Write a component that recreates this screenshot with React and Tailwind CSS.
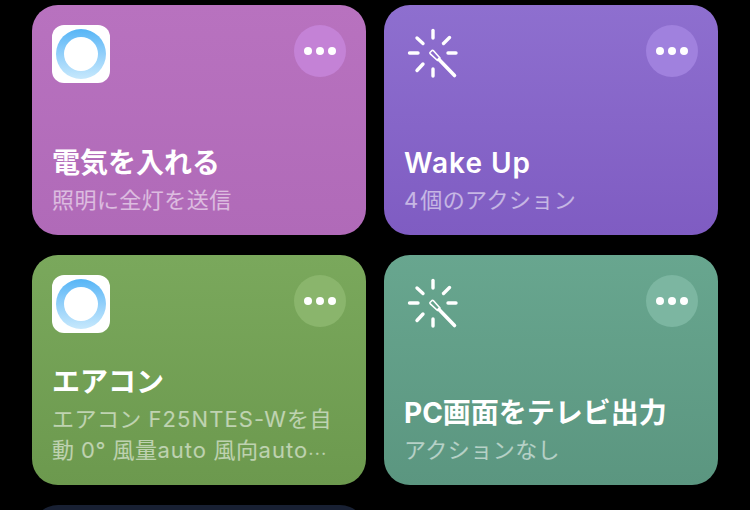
const FONT = "font-['Inter','Noto_Sans_CJK_JP',sans-serif]";

function AppIcon() {
  return (
    <div className="w-[58px] h-[58px] rounded-[12px] bg-white flex items-center justify-center">
      <div className="w-[50px] h-[50px] rounded-full bg-gradient-to-b from-[#55b5f6] to-[#c6e8fc] flex items-center justify-center">
        <div className="w-[34px] h-[34px] rounded-full bg-white" />
      </div>
    </div>
  );
}

function Wand() {
  return (
    <svg width="58" height="58" viewBox="0 0 58 58" fill="none" stroke="white" strokeLinecap="round" strokeWidth="3.4">
      <path d="M29 5.5V13" />
      <path d="M29 44V51" />
      <path d="M5.5 28H14" />
      <path d="M44 28H52" />
      <path d="M13 13L19 18.5" />
      <path d="M45.5 12.5L39.5 18.5" />
      <path d="M13 45.5L19 39" />
      <path d="M26 27.5L28 25.5Q28.8 25 29.5 25.8L36 33L33.5 35.5L26.3 28.8Q25.6 28.2 26 27.5Z" strokeWidth="1.6" strokeLinejoin="round" />
      <path d="M35 34.5L50.5 50.5" strokeWidth="3.6" />
    </svg>
  );
}

function Card({ bg, btn, icon, title, sub }) {
  return (
    <div className={`h-[230px] rounded-[26px] ${bg} px-5 pt-5 pb-[19px] flex flex-col justify-between overflow-hidden`}>
      <div className="flex justify-between items-start">
        {icon}
        <div className={`w-[52px] h-[52px] rounded-full ${btn} flex items-center justify-center gap-[4px]`}>
          <span className="w-[8px] h-[8px] rounded-full bg-white" />
          <span className="w-[8px] h-[8px] rounded-full bg-white" />
          <span className="w-[8px] h-[8px] rounded-full bg-white" />
        </div>
      </div>
      <div>
        <div className="text-[28px] leading-[32px] font-bold text-white whitespace-nowrap">{title}</div>
        <div className="mt-[6px] text-[22px] leading-[31px] tracking-[0.45px] text-white/55 break-all">{sub}</div>
      </div>
    </div>
  );
}

export default function App() {
  return (
    <div className={`w-[750px] h-[510px] overflow-hidden bg-black pt-[5px] px-[32px] ${FONT}`}>
      <div className="grid grid-cols-[334px_334px] gap-x-[18px] gap-y-[20px]">
        <Card bg="bg-gradient-to-b from-[#b872bf] to-[#b06ab8]" btn="bg-[#c482d6]" icon={<AppIcon />} title="電気を入れる" sub="照明に全灯を送信" />
        <Card
          bg="bg-gradient-to-b from-[#8e6fcf] to-[#7f5cc2]"
          btn="bg-[#a081de]"
          icon={<Wand />}
          title={<span className="font-semibold tracking-[1px]">Wake Up</span>}
          sub={<><span className="tracking-[2px]">4</span>個のアクション</>}
        />
        <Card
          bg="bg-gradient-to-b from-[#7aa85c] to-[#6c994e]"
          btn="bg-[#8ab56c]"
          icon={<AppIcon />}
          title="エアコン"
          sub={
            <>
              エアコン <span className="tracking-[1.1px]">F25NTES-W</span>を自動 0° 風量<span className="tracking-[1px]">auto</span> 風向<span className="tracking-[1px]">auto</span>
              <span className="font-['Noto_Sans_CJK_JP'] text-[17px] leading-[0] tracking-normal align-[3px]">…</span>
            </>
          }
        />
        <Card bg="bg-gradient-to-b from-[#68a68f] to-[#5b9680]" btn="bg-[#7cb6a1]" icon={<Wand />} title="PC画面をテレビ出力" sub="アクションなし" />
        <div className="h-[230px] rounded-[26px] bg-[#182033]" />
      </div>
    </div>
  );
}
